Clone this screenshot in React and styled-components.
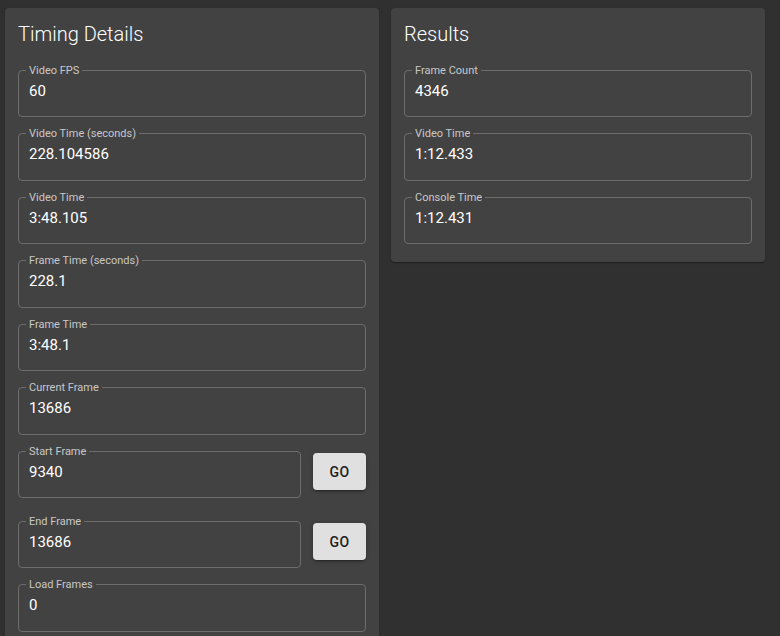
import React from 'react';
import styled, { createGlobalStyle } from 'styled-components';

const GlobalStyle = createGlobalStyle`
    html, body {
        margin: 0;
        background: #303030;
        font-family: Roboto, "Noto Sans", sans-serif;
        color: #fff;
    }
`;

const Page = styled.div`
    display: flex;
    align-items: flex-start;
    gap: 12px;
    padding: 8px 15px 0 5px;
`;

const Panel = styled.section`
    flex: 1;
    background: #424242;
    border-radius: 4px;
    box-shadow: 0 2px 1px -1px rgba(0, 0, 0, 0.2), 0 1px 1px 0 rgba(0, 0, 0, 0.14),
        0 1px 3px 0 rgba(0, 0, 0, 0.12);
    padding: 14px 13px 18px;
`;

const Title = styled.h2`
    margin: 0 0 17.5px;
    font-size: 20px;
    line-height: 24px;
    font-weight: 300;
`;

const Row = styled.div`
    display: flex;
    align-items: flex-start;
    gap: 12px;
    margin-bottom: ${(p) => (p.$last ? '0' : p.$spaced ? '16.5px' : '10px')};
`;

const Field = styled.fieldset`
    flex: 1;
    min-width: 0;
    margin: 0;
    padding: 0 7px 15.5px;
    border: 1px solid #6d6d6d;
    border-radius: 4px;
`;

const Label = styled.legend`
    padding: 0 3px;
    font-size: 11px;
    line-height: 13px;
    color: #c8c8c8;
`;

const Value = styled.div`
    margin-top: 4px;
    padding: 0 3px;
    font-size: 15px;
    line-height: 20px;
    font-weight: 400;
    color: #fff;
`;

const GoButton = styled.button`
    width: 53px;
    height: 37px;
    margin-top: 8.5px;
    border: none;
    border-radius: 4px;
    background: #e0e0e0;
    color: #212121;
    font-family: Roboto, sans-serif;
    font-size: 14px;
    font-weight: 500;
    letter-spacing: 0.4px;
    box-shadow: 0 3px 1px -2px rgba(0, 0, 0, 0.2), 0 2px 2px 0 rgba(0, 0, 0, 0.14),
        0 1px 5px 0 rgba(0, 0, 0, 0.12);
    cursor: pointer;
`;

const timing = [
    { label: 'Video FPS', value: '60' },
    { label: 'Video Time (seconds)', value: '228.104586' },
    { label: 'Video Time', value: '3:48.105' },
    { label: 'Frame Time (seconds)', value: '228.1' },
    { label: 'Frame Time', value: '3:48.1' },
    { label: 'Current Frame', value: '13686' },
    { label: 'Start Frame', value: '9340', go: true, spaced: true },
    { label: 'End Frame', value: '13686', go: true },
    { label: 'Load Frames', value: '0' },
];

const results = [
    { label: 'Frame Count', value: '4346' },
    { label: 'Video Time', value: '1:12.433' },
    { label: 'Console Time', value: '1:12.431' },
];

function FieldRows({ items }) {
    return items.map((item, i) => (
        <Row key={item.label} $spaced={item.spaced} $last={i === items.length - 1}>
            <Field>
                <Label>{item.label}</Label>
                <Value>{item.value}</Value>
            </Field>
            {item.go && <GoButton>GO</GoButton>}
        </Row>
    ));
}

export default function App() {
    return (
        <Page>
            <GlobalStyle />
            <Panel>
                <Title>Timing Details</Title>
                <FieldRows items={timing} />
            </Panel>
            <Panel>
                <Title>Results</Title>
                <FieldRows items={results} />
            </Panel>
        </Page>
    );
}
